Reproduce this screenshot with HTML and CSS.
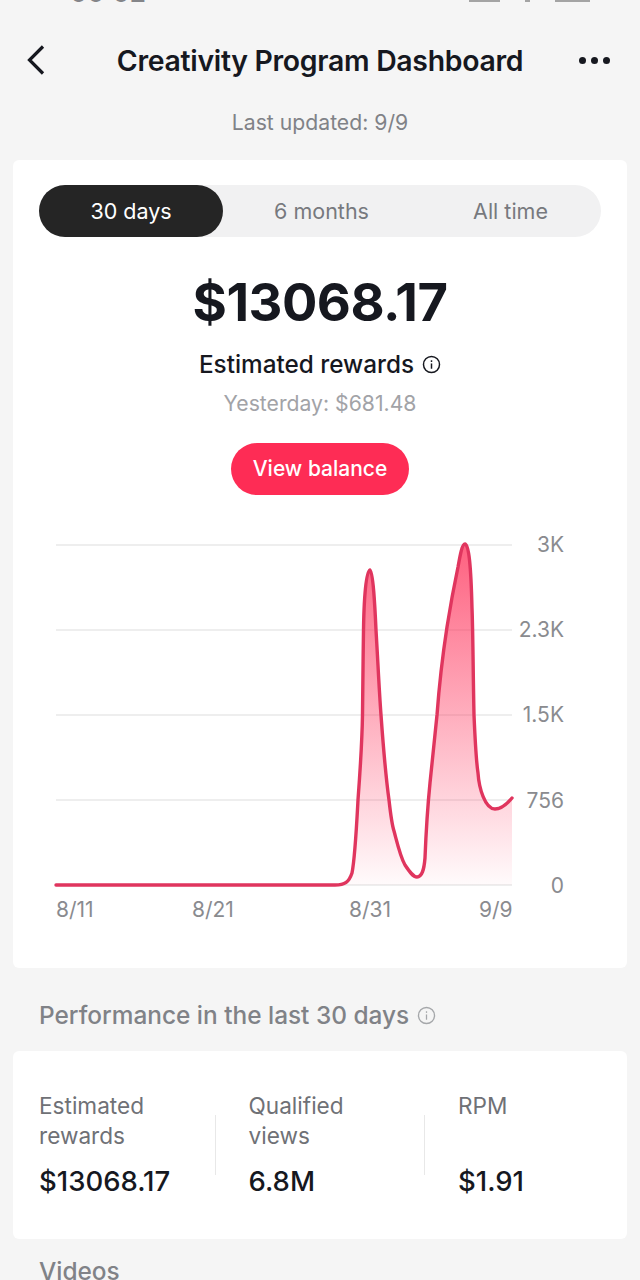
FILE: index.html
```html
<!DOCTYPE html>
<html>
<head>
    <title>Creativity Program Dashboard</title>
    <link rel="stylesheet" href="styles.css">
</head>
<body>
    <div class="status-bar">
        <span class="status-time">00:02</span>
        <span class="status-icons">
            <i class="signal"></i>
            <i class="wifi"></i>
            <i class="battery"></i>
        </span>
    </div>

    <div class="nav">
        <svg class="back" width="24" height="32" viewBox="0 0 24 32">
            <path d="M19 2.5 L5.5 16 L19 29.5" fill="none" stroke="#16181f" stroke-width="3.2"/>
        </svg>
        <h1>Creativity Program Dashboard</h1>
        <div class="more"><i></i><i></i><i></i></div>
    </div>

    <div class="updated">Last updated: 9/9</div>

    <div class="card main-card">
        <div class="tabs">
            <div class="tab active">30 days</div>
            <div class="tab">6 months</div>
            <div class="tab">All time</div>
        </div>

        <div class="total">$13068.17</div>
        <div class="total-label">
            Estimated rewards
            <svg width="19" height="19" viewBox="0 0 18 18">
                <circle cx="9" cy="9" r="7.6" fill="none" stroke="#16181f" stroke-width="1.4"/>
                <rect x="8.3" y="8" width="1.4" height="5" fill="#16181f"/>
                <rect x="8.3" y="5" width="1.4" height="1.6" fill="#16181f"/>
            </svg>
        </div>
        <div class="yesterday">Yesterday: $681.48</div>
        <div class="balance-button">View balance</div>

        <svg class="chart" width="614" height="400" viewBox="0 0 614 400">
            <defs>
                <linearGradient id="fade" x1="0" y1="0" x2="0" y2="1">
                    <stop offset="0" stop-color="#fe2c55" stop-opacity="0.75"/>
                    <stop offset="1" stop-color="#fe2c55" stop-opacity="0.02"/>
                </linearGradient>
            </defs>
            <g stroke="#e8e8e8" stroke-width="1.5">
                <line x1="43" y1="17" x2="499" y2="17"/>
                <line x1="43" y1="102" x2="499" y2="102"/>
                <line x1="43" y1="187" x2="499" y2="187"/>
                <line x1="43" y1="272" x2="499" y2="272"/>
                <line x1="43" y1="357" x2="499" y2="357"/>
            </g>
            <path fill="url(#fade)" d="M322 357 C332 357 336 354 339 345 C342 330 343.5 300 345 272 C347 245 349 215 349.5 187 C350 155 350 130 350.5 102 C351 70 353 42 357 42 C360 42 362 80 363 102 C365 135 366 160 368 187 C370 215 373 250 376 272 C378 290 379 297 381 303 C384 314 387 328 392 337 C396 343 400 349 404 349 C409 349 411 342 412 330 C413 305 415 275 417 255 C419 235 421 215 424 187 C426 160 430 125 434 99 C437 80 441 58 445 39 C447 28 449 16 452 16 C456 16 458 40 459 80 C460 105 460 140 461 187 C462 210 463 232 465 245 C466 260 472 281 482 281 C488 281 494 276 499 270 L499 357 Z"/>
            <path fill="none" stroke="#e0355e" stroke-width="3.4" stroke-linejoin="round" stroke-linecap="round" d="M43 357 L322 357 C332 357 336 354 339 345 C342 330 343.5 300 345 272 C347 245 349 215 349.5 187 C350 155 350 130 350.5 102 C351 70 353 42 357 42 C360 42 362 80 363 102 C365 135 366 160 368 187 C370 215 373 250 376 272 C378 290 379 297 381 303 C384 314 387 328 392 337 C396 343 400 349 404 349 C409 349 411 342 412 330 C413 305 415 275 417 255 C419 235 421 215 424 187 C426 160 430 125 434 99 C437 80 441 58 445 39 C447 28 449 16 452 16 C456 16 458 40 459 80 C460 105 460 140 461 187 C462 210 463 232 465 245 C466 260 472 281 482 281 C488 281 494 276 499 270"/>
            <g class="axis" text-anchor="end">
                <text x="551" y="24">3K</text>
                <text x="551" y="109">2.3K</text>
                <text x="551" y="194">1.5K</text>
                <text x="551" y="280">756</text>
                <text x="551" y="365">0</text>
            </g>
            <g class="axis">
                <text x="43" y="389">8/11</text>
                <text x="179" y="389">8/21</text>
                <text x="336" y="389">8/31</text>
                <text x="466" y="389">9/9</text>
            </g>
        </svg>
    </div>

    <div class="section-title">
        Performance in the last 30 days
        <svg width="19" height="19" viewBox="0 0 18 18">
            <circle cx="9" cy="9" r="7.6" fill="none" stroke="#a5a7aa" stroke-width="1.3"/>
            <rect x="8.4" y="8" width="1.2" height="5" fill="#a5a7aa"/>
            <rect x="8.4" y="5" width="1.2" height="1.5" fill="#a5a7aa"/>
        </svg>
    </div>

    <div class="card stats-card">
        <div class="stat">
            <div class="stat-label">Estimated<br>rewards</div>
            <div class="stat-value">$13068.17</div>
        </div>
        <div class="stat">
            <div class="stat-label">Qualified<br>views</div>
            <div class="stat-value">6.8M</div>
        </div>
        <div class="stat">
            <div class="stat-label">RPM</div>
            <div class="stat-value">$1.91</div>
        </div>
    </div>

    <div class="section-title videos">Videos</div>
</body>
</html>
```

FILE: styles.css
```css
html, body {
    height: 1280px;
    overflow: hidden;
}

body {
    margin: 0;
    background-color: #f5f5f5;
    color: #16181f;
    font-family: Inter, "Liberation Sans", sans-serif;
}

.status-bar {
    height: 2px;
    overflow: hidden;
    display: flex;
    justify-content: space-between;
    padding: 0 50px 0 70px;
    opacity: 0.5;
}

.status-time {
    font-size: 26px;
    font-weight: 600;
    line-height: 20px;
    margin-top: -17px;
}

.status-icons {
    display: flex;
    gap: 25px;
}

.status-icons i {
    display: block;
    height: 2px;
    background-color: #555;
}

.signal {
    width: 31px;
}

.wifi {
    width: 5px;
}

.battery {
    width: 35px;
}

.nav {
    height: 64px;
    margin-top: 26px;
    display: grid;
    grid-template-columns: 1fr auto 1fr;
    align-items: center;
}

.back {
    margin-left: 24px;
}

.nav h1 {
    margin: 0;
    font-size: 28.4px;
    font-weight: 600;
    letter-spacing: -0.3px;
}

.more {
    display: flex;
    gap: 5px;
    justify-self: end;
    margin-right: 30px;
}

.more i {
    width: 7px;
    height: 7px;
    border-radius: 50%;
    background-color: #16181f;
}

.updated {
    margin-top: 15px;
    text-align: center;
    color: #808287;
    font-size: 21.2px;
    line-height: 30px;
}

.card {
    background-color: #fff;
    margin: 0 13px;
    border-radius: 6px;
}

.main-card {
    margin-top: 23px;
    height: 808px;
    padding-top: 25px;
    box-sizing: border-box;
    text-align: center;
}

.tabs {
    display: grid;
    grid-template-columns: 184px 1fr 1fr;
    height: 52px;
    margin: 0 26px;
    border-radius: 26px;
    background-color: #f1f1f2;
}

.tab {
    padding-left: 8px;
    line-height: 52px;
    font-size: 21.5px;
    color: #77797e;
}

.tab.active {
    padding-left: 0;
    background-color: #252525;
    color: #fff;
    border-radius: 26px;
}

.total {
    margin-top: 33px;
    font-size: 52.5px;
    font-weight: 700;
    line-height: 64px;
    letter-spacing: -0.5px;
}

.total-label {
    margin-top: 14px;
    display: flex;
    justify-content: center;
    align-items: center;
    gap: 8px;
    font-size: 24.3px;
    font-weight: 500;
    line-height: 32px;
}

.yesterday {
    margin-top: 8px;
    font-size: 21.2px;
    line-height: 30px;
    color: #a2a3a7;
}

.balance-button {
    margin: 25px auto 0;
    width: 178px;
    height: 52px;
    line-height: 52px;
    border-radius: 26px;
    background-color: #fe2c55;
    color: #fff;
    font-size: 21px;
    font-weight: 500;
}

.chart {
    display: block;
    margin-top: 33px;
}

.axis text {
    font-size: 21px;
    fill: #8a8b8f;
}

.section-title {
    margin: 30px 39px 0;
    display: flex;
    align-items: center;
    gap: 8px;
    font-size: 24.4px;
    font-weight: 500;
    line-height: 34px;
    color: #808287;
}

.stats-card {
    margin-top: 19px;
    height: 188px;
    padding: 40px 0 0 26px;
    box-sizing: border-box;
    display: grid;
    grid-template-columns: 209.5px 209.5px 1fr;
}

.stat {
    position: relative;
}

.stat + .stat::before {
    content: "";
    position: absolute;
    left: -34px;
    top: 24px;
    width: 1px;
    height: 60px;
    background-color: #e8e8e8;
}

.stat-label {
    height: 60px;
    font-size: 22.6px;
    line-height: 30px;
    color: #6f7176;
}

.stat-value {
    margin-top: 12px;
    font-size: 27.5px;
    font-weight: 500;
    line-height: 36px;
}

.videos {
    margin-top: 15px;
}
```
